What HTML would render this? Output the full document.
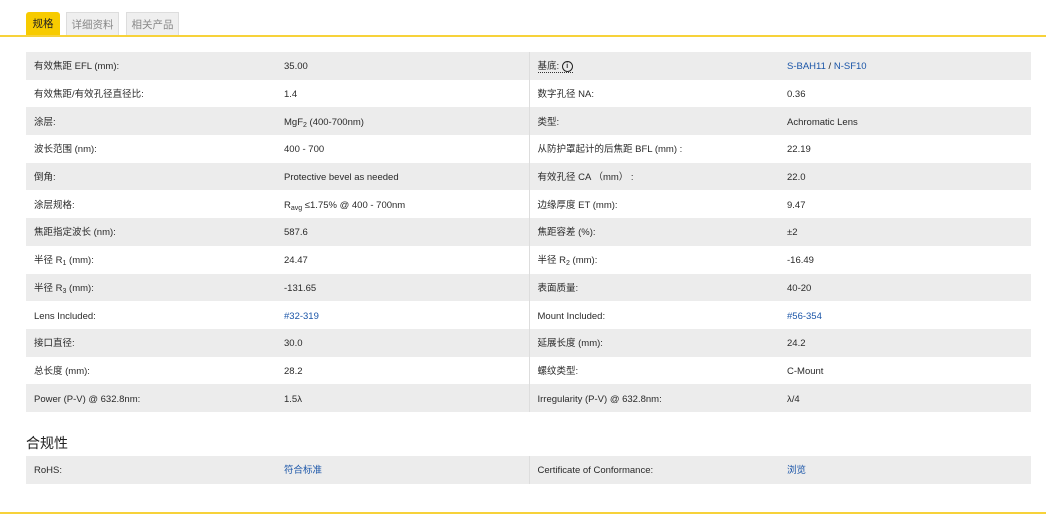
<!DOCTYPE html>
<html><head><meta charset="utf-8"><style>
body{margin:0;width:1046px;height:515px;background:#fff;font-family:"Liberation Sans","Noto Sans CJK SC",sans-serif;font-size:9.5px;color:#2a2a2a;position:relative;overflow:hidden}
.tab{position:absolute;top:12px;height:24px;line-height:24px;font-size:10.5px;text-align:center;box-sizing:border-box;color:#888}
.t1{left:26px;width:34px;background:#f7cb00;color:#222;border-radius:3px 3px 0 0}
.t2{left:66px;width:53px;background:#efefef;border:1px solid #ddd;border-bottom:none}
.t3{left:126px;width:53px;background:#efefef;border:1px solid #ddd;border-bottom:none}
.line{position:absolute;left:0;width:1046px;height:2px;background:#f7d23a}
table{position:absolute;left:26px;width:1005px;border-collapse:collapse;table-layout:fixed}
td{height:27.7px;padding:3px 0 0 8px;vertical-align:middle;white-space:nowrap;box-sizing:border-box;line-height:14px}
tr:nth-child(odd) td{background:#ececec}
td.c3{border-left:1px solid #ddd}
a{color:#1a55a8;text-decoration:none}
sub{font-size:7px;line-height:0;vertical-align:-2px}
h3{position:absolute;left:26px;top:433px;margin:0;font-size:14px;font-weight:normal;color:#222}
.i{display:inline-block;width:9px;height:9px;border:1.2px solid #222;border-radius:50%;font-size:7px;line-height:9px;text-align:center;font-weight:bold;vertical-align:middle}
</style></head><body>
<div class="tab t1">规格</div><div class="tab t2">详细资料</div><div class="tab t3">相关产品</div>
<div class="line" style="top:35px"></div>
<table style="top:52px">
<colgroup><col style="width:250px"><col style="width:253px"><col style="width:250px"><col></colgroup>
<tr><td>有效焦距 EFL (mm):</td><td>35.00</td><td class="c3"><span style="border-bottom:1px dotted #333">基底: <span class="i">i</span></span></td><td><a>S-BAH11</a> / <a>N-SF10</a></td></tr>
<tr><td>有效焦距/有效孔径直径比:</td><td>1.4</td><td class="c3">数字孔径 NA:</td><td>0.36</td></tr>
<tr><td>涂层:</td><td>MgF<sub>2</sub> (400-700nm)</td><td class="c3">类型:</td><td>Achromatic Lens</td></tr>
<tr><td>波长范围 (nm):</td><td>400 - 700</td><td class="c3">从防护罩起计的后焦距 BFL (mm) :</td><td>22.19</td></tr>
<tr><td>倒角:</td><td>Protective bevel as needed</td><td class="c3">有效孔径 CA （mm） :</td><td>22.0</td></tr>
<tr><td>涂层规格:</td><td>R<sub>avg</sub> ≤1.75% @ 400 - 700nm</td><td class="c3">边缘厚度 ET (mm):</td><td>9.47</td></tr>
<tr><td>焦距指定波长 (nm):</td><td>587.6</td><td class="c3">焦距容差 (%):</td><td>±2</td></tr>
<tr><td>半径 R<sub>1</sub> (mm):</td><td>24.47</td><td class="c3">半径 R<sub>2</sub> (mm):</td><td>-16.49</td></tr>
<tr><td>半径 R<sub>3</sub> (mm):</td><td>-131.65</td><td class="c3">表面质量:</td><td>40-20</td></tr>
<tr><td>Lens Included:</td><td><a>#32-319</a></td><td class="c3">Mount Included:</td><td><a>#56-354</a></td></tr>
<tr><td>接口直径:</td><td>30.0</td><td class="c3">延展长度 (mm):</td><td>24.2</td></tr>
<tr><td>总长度 (mm):</td><td>28.2</td><td class="c3">螺纹类型:</td><td>C-Mount</td></tr>
<tr><td>Power (P-V) @ 632.8nm:</td><td>1.5λ</td><td class="c3">Irregularity (P-V) @ 632.8nm:</td><td>λ/4</td></tr>
</table>
<h3>合规性</h3>
<table style="top:456px">
<colgroup><col style="width:250px"><col style="width:253px"><col style="width:250px"><col></colgroup>
<tr><td>RoHS:</td><td><a>符合标准</a></td><td class="c3">Certificate of Conformance:</td><td><a>浏览</a></td></tr>
</table>
<div class="line" style="top:512px"></div>
</body></html>
